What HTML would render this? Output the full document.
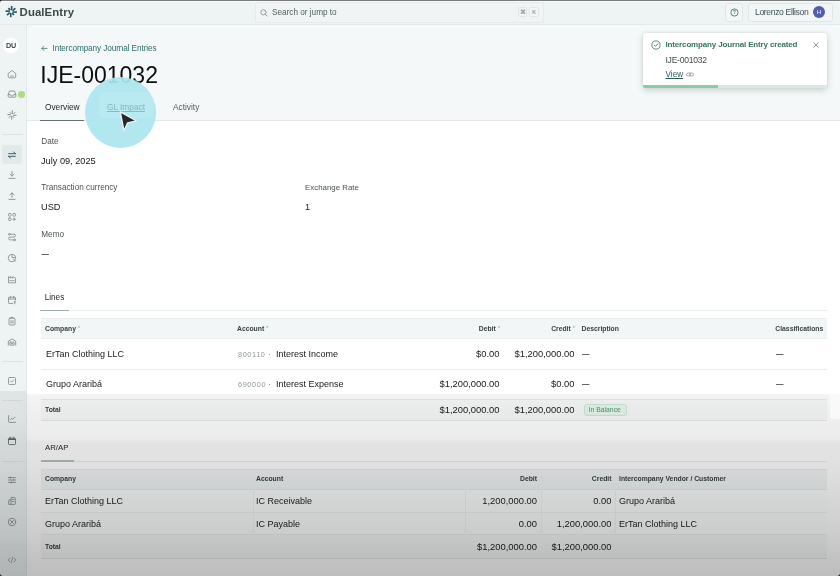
<!DOCTYPE html>
<html lang="en">
<head>
<meta charset="utf-8">
<title>IJE-001032 - DualEntry</title>
<style>
*{box-sizing:border-box;margin:0;padding:0}
html,body{width:840px;height:576px;overflow:hidden;background:#fff}
body{font-family:"Liberation Sans",sans-serif;color:#1c2222;position:relative;-webkit-font-smoothing:antialiased}
.abs{position:absolute}
.t{position:absolute;white-space:nowrap;line-height:1}
#topline{left:0;top:0;width:840px;height:2px;background:linear-gradient(#6a6c6c 0,#8a8c8c 45%,#f6f8f8 55%,#fafbfb 100%)}
#topbar{left:0;top:0;width:840px;height:25px;background:#eef3f4;border-bottom:1px solid #e4eaeb}
#sidebar{left:0;top:25px;width:26.5px;height:551px;background:#eef3f4;border-right:1px solid #e2e8e9}
#headbg{left:26.5px;top:25px;width:813.5px;height:96px;background:#f4f8f8;border-bottom:1px solid #e3e8e8}
#brand{left:19.6px;top:6.5px;font-size:11.4px;font-weight:700;color:#3f4949;letter-spacing:0.08px}
#search{left:254.5px;top:2px;width:289px;height:20.5px;border:1px solid #e5eaeb;border-radius:2.5px;background:#f0f4f5}
#searchtxt{left:272px;top:9px;font-size:8.2px;color:#525c5c}
.kbd{top:6.8px;width:9.6px;height:10.2px;border:1px solid #e1e6e7;border-radius:2px;background:#f1f5f6;font-size:5.6px;color:#687272;text-align:center;line-height:8.4px}
#help{left:725px;top:3px;width:17.5px;height:18.5px;border:1px solid #e0e6e7;border-radius:3px;background:#f2f6f6}
#user{left:748px;top:3px;width:84.5px;height:18.5px;border:1px solid #e0e6e7;border-radius:3px;background:#f2f6f6}
#username{left:755px;top:8px;font-size:8.6px;color:#3d5252;letter-spacing:-0.36px}
#avatar{left:813px;top:6px;width:12px;height:12px;border-radius:50%;background:#525db0;color:#fff;font-size:6px;text-align:center;line-height:12px}
#du{left:3.1px;top:37.8px;width:15.7px;height:15.7px;border-radius:50%;background:#fff;font-size:7.2px;letter-spacing:-0.2px;font-weight:700;color:#3b4545;text-align:center;line-height:16.4px}
#crumb{left:52.5px;top:45.2px;font-size:8.2px;color:#2f6c6c;letter-spacing:-0.09px}
#title{left:40.3px;top:63.5px;font-size:23px;color:#0c0f0f;letter-spacing:0}
.tab{top:103.3px;font-size:8.3px;color:#1c2222}
.lbl{font-size:8.2px;color:#4a5353}
.val{font-size:9.2px;color:#141818}

.th{font-size:6.8px;font-weight:700;color:#363f3f}
.st{color:#5fb5b5;font-weight:400;font-size:6px;position:relative;top:-1px}
.td{font-size:9px;color:#171b1b}
.tc{font-size:7.3px;color:#8f9999;letter-spacing:0.62px}
.r{left:auto;text-align:right}
.n{font-size:9.4px;line-height:0}
.ds{font-size:7.4px;font-weight:700;margin-top:0.3px;color:#2a3030}
.vd{top:491px;width:1px;height:42px;background:#f0f3f3}
#toast{left:643.3px;top:33px;width:184.2px;height:55px;background:#fff;border-radius:2px;box-shadow:0 2px 6px rgba(40,60,60,0.22),0 0 1px rgba(40,60,60,0.25)}
#fade{left:26px;top:394px;width:814px;height:182px;background:linear-gradient(rgba(0,0,0,0.045),rgba(0,0,0,0.065) 14.3%,rgba(0,0,0,0.078) 25.2%,rgba(0,0,0,0.105) 26%,rgba(0,0,0,0.125) 41.8%,rgba(0,0,0,0.16) 58.2%,rgba(0,0,0,0.195) 76.9%,rgba(0,0,0,0.24) 90.1%,rgba(0,0,0,0.255) 100%)}
#fade2{left:0;top:391px;width:26px;height:185px;background:linear-gradient(rgba(0,0,0,0.055),rgba(0,0,0,0.07) 15%,rgba(0,0,0,0.105) 27%,rgba(0,0,0,0.13) 43%,rgba(0,0,0,0.165) 59%,rgba(0,0,0,0.2) 77%,rgba(0,0,0,0.245) 90%,rgba(0,0,0,0.26) 100%)}
#root{position:absolute;left:0;top:0;width:840px;height:576px;overflow:hidden;will-change:transform}
</style>
</head>
<body>
<div id="root">
<div class="abs" id="topbar"></div>
<div class="abs" id="topline"></div>
<div class="abs" id="sidebar"></div>
<div class="abs" id="headbg"></div>

<!-- top bar -->
<svg class="abs" style="left:5px;top:6px" width="13" height="12" viewBox="0 0 13 12"><g stroke="#1c5660" stroke-width="1.6" stroke-linecap="butt" fill="none"><path d="M6.65 4.30 L6.65 0.00"/><path d="M7.72 4.72 L10.34 2.10"/><path d="M7.50 6.05 L11.90 6.05"/><path d="M7.08 7.12 L8.99 9.03"/><path d="M5.75 6.90 L5.75 11.20"/><path d="M4.68 6.48 L2.06 9.10"/><path d="M4.90 5.15 L0.50 5.15"/><path d="M5.32 4.08 L3.41 2.17"/></g></svg>
<div class="t" id="brand">DualEntry</div>
<div class="abs" id="search"></div>
<svg class="abs" style="left:260px;top:8.5px" width="8" height="8" viewBox="0 0 8 8"><circle cx="3.4" cy="3.3" r="2.6" fill="none" stroke="#7f8a8a" stroke-width="0.8"/><path d="M5.4 5.3 L7.3 7.2" stroke="#7f8a8a" stroke-width="0.8" stroke-linecap="round"/></svg>
<div class="t" id="searchtxt">Search or jump to</div>
<div class="abs kbd" style="left:517.9px">⌘</div>
<div class="abs kbd" style="left:529.4px">K</div>
<div class="abs" id="help"></div>
<svg class="abs" style="left:729.5px;top:7.5px" width="9" height="9" viewBox="0 0 9 9"><circle cx="4.5" cy="4.5" r="3.6" fill="none" stroke="#2f6c6c" stroke-width="0.8"/><text x="4.5" y="6.15" font-size="4.6" font-weight="700" text-anchor="middle" fill="#2f6c6c" font-family="Liberation Sans, sans-serif">?</text></svg>
<div class="abs" id="user"></div>
<div class="t" id="username">Lorenzo Ellison</div>
<div class="abs" id="avatar">H</div>

<!-- sidebar -->
<div class="abs" id="du">DU</div>

<svg class="abs" style="left:6.7px;top:68.8px" width="10" height="10" viewBox="0 0 10 10" fill="none" stroke="#848e8e" stroke-width="0.85" stroke-linecap="round" stroke-linejoin="round"><path d="M1.3 4.5 L5 1.4 L8.7 4.5 V7.9 a0.9 0.9 0 0 1 -0.9 0.9 H2.2 a0.9 0.9 0 0 1 -0.9 -0.9 Z"/><path d="M3.6 7.1 H6.4"/></svg>
<svg class="abs" style="left:6.7px;top:89.3px" width="10" height="10" viewBox="0 0 10 10" fill="none" stroke="#848e8e" stroke-width="0.85" stroke-linecap="round" stroke-linejoin="round"><path d="M1.2 5.6 L2.5 2 H7.5 L8.8 5.6 V7.6 a0.6 0.6 0 0 1 -0.6 0.6 H1.8 a0.6 0.6 0 0 1 -0.6 -0.6 Z"/><path d="M1.2 5.6 H3.3 a1.7 1.5 0 0 0 3.4 0 H8.8"/></svg>
<div class="abs" style="left:18.3px;top:91.3px;width:6.6px;height:6.6px;border-radius:50%;background:#aedb84"></div>
<svg class="abs" style="left:6.5px;top:109.7px" width="10" height="10" viewBox="0 0 10 10" fill="none" stroke="#6a7474" stroke-width="0.8" stroke-linecap="butt"><path d="M5.30 3.90 L5.30 0.40 M6.13 4.29 L8.18 2.24 M6.10 5.30 L9.60 5.30 M5.71 6.13 L7.33 7.76 M4.70 6.10 L4.70 9.60 M3.87 5.71 L1.82 7.76 M3.90 4.70 L0.40 4.70 M4.29 3.87 L2.67 2.24"/></svg>
<div class="abs" style="left:2px;top:134px;width:21px;height:1px;background:#dde3e3"></div>
<div class="abs" style="left:1.5px;top:145px;width:20px;height:18.5px;border-radius:2px;background:#e1e9e9"></div>
<svg class="abs" style="left:6.7px;top:149.5px" width="10" height="10" viewBox="0 0 10 10" fill="none" stroke="#2f5f62" stroke-width="0.95" stroke-linecap="round" stroke-linejoin="round"><path d="M1.6 3.7 H8.4 M6.6 1.9 L8.4 3.7"/><path d="M8.4 6.3 H1.6 M3.4 8.1 L1.6 6.3"/></svg>
<svg class="abs" style="left:6.7px;top:170.0px" width="10" height="10" viewBox="0 0 10 10" fill="none" stroke="#848e8e" stroke-width="0.85" stroke-linecap="round" stroke-linejoin="round"><path d="M5 1.4 V6 M2.9 4 L5 6.1 L7.1 4 M1.9 8.4 H8.1"/></svg>
<svg class="abs" style="left:6.7px;top:191.0px" width="10" height="10" viewBox="0 0 10 10" fill="none" stroke="#848e8e" stroke-width="0.85" stroke-linecap="round" stroke-linejoin="round"><path d="M5 6.4 V1.8 M2.9 3.9 L5 1.8 L7.1 3.9 M1.9 8.4 H8.1"/></svg>
<svg class="abs" style="left:6.7px;top:211.5px" width="10" height="10" viewBox="0 0 10 10" fill="none" stroke="#848e8e" stroke-width="0.85" stroke-linecap="round" stroke-linejoin="round"><rect x="1.5" y="1.5" width="2.6" height="2.6" rx="0.8"/><rect x="5.9" y="1.5" width="2.6" height="2.6" rx="0.8"/><rect x="1.5" y="5.9" width="2.6" height="2.6" rx="0.8"/><path d="M7.2 5.9 V8.5 M5.9 7.2 H8.5"/></svg>
<svg class="abs" style="left:6.7px;top:232.0px" width="10" height="10" viewBox="0 0 10 10" fill="none" stroke="#848e8e" stroke-width="0.85" stroke-linecap="round" stroke-linejoin="round"><circle cx="2.4" cy="2.3" r="0.9"/><path d="M3.4 2.3 H7 a1.4 1.4 0 0 1 0 2.8 H3 a1.4 1.4 0 0 0 0 2.8 H6.4"/><circle cx="7.5" cy="7.9" r="0.9"/></svg>
<svg class="abs" style="left:6.7px;top:253.0px" width="10" height="10" viewBox="0 0 10 10" fill="none" stroke="#848e8e" stroke-width="0.85" stroke-linecap="round" stroke-linejoin="round"><path d="M8.6 5.6 A3.7 3.7 0 1 1 4.4 1.4"/><path d="M5.4 1.3 A3.6 3.6 0 0 1 8.8 4.6 H5.4 Z"/><path d="M6.8 6.2 L8.4 8.2"/></svg>
<svg class="abs" style="left:6.7px;top:274.0px" width="10" height="10" viewBox="0 0 10 10" fill="none" stroke="#848e8e" stroke-width="0.85" stroke-linecap="round" stroke-linejoin="round"><path d="M1.5 8.4 V2.6 L3.6 4.2 V2.6 L5.8 4.2 V2.6 L8.5 4.2 V8.4 Z"/><path d="M3 6.6 H3.8 M4.8 6.6 H5.6 M6.6 6.6 H7.2"/></svg>
<svg class="abs" style="left:6.7px;top:295.0px" width="10" height="10" viewBox="0 0 10 10" fill="none" stroke="#848e8e" stroke-width="0.85" stroke-linecap="round" stroke-linejoin="round"><path d="M8.5 5 V2.9 a0.7 0.7 0 0 0 -0.7 -0.7 H2.2 a0.7 0.7 0 0 0 -0.7 0.7 V7.8 a0.7 0.7 0 0 0 0.7 0.7 H5.5"/><path d="M3.3 1.3 V3 M6.7 1.3 V3 M1.5 4 H8.5"/><path d="M7.8 6.2 V8.8 M6.9 7 H8.3"/></svg>
<svg class="abs" style="left:6.7px;top:316.0px" width="10" height="10" viewBox="0 0 10 10" fill="none" stroke="#848e8e" stroke-width="0.85" stroke-linecap="round" stroke-linejoin="round"><rect x="2" y="2.2" width="6" height="6.8" rx="0.9"/><path d="M3.8 2.2 V1.4 H6.2 V2.2"/><path d="M3.6 5 H6.4 M3.6 6.8 H6.4"/></svg>
<svg class="abs" style="left:6.7px;top:336.5px" width="10" height="10" viewBox="0 0 10 10" fill="none" stroke="#808a8a" stroke-width="0.85" stroke-linecap="round" stroke-linejoin="round"><path d="M1.3 8.2 V4.2 L5 2 L8.7 4.2 V8.2"/><rect x="2.9" y="5.2" width="4.2" height="3" rx="0.4"/><path d="M4.3 6.7 H5.7"/></svg>
<div class="abs" style="left:2px;top:361px;width:21px;height:1px;background:#dde3e3"></div>
<svg class="abs" style="left:6.7px;top:375.7px" width="10" height="10" viewBox="0 0 10 10" fill="none" stroke="#848e8e" stroke-width="0.85" stroke-linecap="round" stroke-linejoin="round"><rect x="1.5" y="1.5" width="7" height="7" rx="1"/><path d="M3.5 5.1 L4.6 6.2 L6.6 3.9"/></svg>
<div class="abs" style="left:2px;top:400px;width:21px;height:1px;background:#dde3e3"></div>
<svg class="abs" style="left:6.7px;top:414.4px" width="10" height="10" viewBox="0 0 10 10" fill="none" stroke="#848e8e" stroke-width="0.85" stroke-linecap="round" stroke-linejoin="round"><path d="M1.6 1.6 V7.4 a1 1 0 0 0 1 1 H8.6"/><path d="M3.2 5.6 L4.6 4.2 L5.8 5.2 L8 3.2"/></svg>
<svg class="abs" style="left:6.7px;top:435.5px" width="10" height="10" viewBox="0 0 10 10" fill="none" stroke="#5e6868" stroke-width="0.85" stroke-linecap="round" stroke-linejoin="round"><rect x="1.5" y="2.2" width="7" height="6.4" rx="0.9"/><path d="M3.3 1.2 V3 M6.7 1.2 V3"/><path d="M1.5 3.4 H8.5" stroke-width="1.3"/></svg>
<div class="abs" style="left:2px;top:460.5px;width:21px;height:1px;background:#dde3e3"></div>
<svg class="abs" style="left:6.7px;top:475.0px" width="10" height="10" viewBox="0 0 10 10" fill="none" stroke="#848e8e" stroke-width="0.85" stroke-linecap="round" stroke-linejoin="round"><path d="M1.4 2.6 H8.6 M1.4 5 H8.6 M1.4 7.4 H8.6"/><path d="M3.4 1.8 V3.4 M6.4 4.2 V5.8 M4.2 6.6 V8.2"/></svg>
<svg class="abs" style="left:6.7px;top:496.0px" width="10" height="10" viewBox="0 0 10 10" fill="none" stroke="#858f8f" stroke-width="0.85" stroke-linecap="round" stroke-linejoin="round"><rect x="4" y="1.6" width="4.2" height="6.8" rx="0.6"/><path d="M4 4 H2.2 a0.5 0.5 0 0 0 -0.5 0.5 V8.4 H4"/><path d="M5.6 3.4 V3.6 M6.6 3.4 V3.6 M5.6 5.4 V5.6 M6.6 5.4 V5.6"/></svg>
<svg class="abs" style="left:6.7px;top:516.7px" width="10" height="10" viewBox="0 0 10 10" fill="none" stroke="#848e8e" stroke-width="0.85" stroke-linecap="round" stroke-linejoin="round"><circle cx="5" cy="5" r="3.7"/><path d="M3.5 3.5 L6.5 6.5 M6.5 3.5 L3.5 6.5"/></svg>
<svg class="abs" style="left:6.7px;top:555.3px" width="10" height="10" viewBox="0 0 10 10" fill="none" stroke="#8a9494" stroke-width="0.75" stroke-linecap="round" stroke-linejoin="round"><path d="M2.9 3.2 L1.1 5 L2.9 6.8 M7.1 3.2 L8.9 5 L7.1 6.8 M5.8 2.2 L4.2 7.8"/></svg>

<!-- heading -->
<svg class="abs" style="left:40.5px;top:45px" width="7" height="7" viewBox="0 0 7 7" fill="none" stroke="#3a7575" stroke-width="0.8" stroke-linecap="round" stroke-linejoin="round"><path d="M6 3.4 H1 M2.9 1.4 L0.9 3.4 L2.9 5.4"/></svg>
<div class="t" id="crumb">Intercompany Journal Entries</div>
<div class="t" id="title">IJE-001032</div>
<div class="t tab" style="left:45px">Overview</div>
<div class="t tab" style="left:107px;color:#4f8d94;text-decoration:underline">GL Impact</div>
<div class="t tab" style="left:173px;color:#525b5b">Activity</div>
<div class="abs" style="left:40.2px;top:119.7px;width:44px;height:1.5px;background:#647070"></div>

<!-- fields -->
<div class="t lbl" style="left:41.3px;top:138px">Date</div>
<div class="t val" style="left:41px;top:157px">July 09, 2025</div>
<div class="t lbl" style="left:41.3px;top:184px">Transaction currency</div>
<div class="t val" style="left:41px;top:203px">USD</div>
<div class="t lbl" style="left:305px;top:184px;font-size:7.9px">Exchange Rate</div>
<div class="t val" style="left:305px;top:203px">1</div>
<div class="t lbl" style="left:41.3px;top:231px">Memo</div>
<div class="t ds" style="left:41.6px;top:249.3px">—</div>

<!-- Lines tab -->
<div class="t" style="left:44.7px;top:294.4px;font-size:8.2px;color:#1c2222">Lines</div>
<div class="abs" style="left:41px;top:310px;width:786px;height:1px;background:#ebefef"></div>
<div class="abs" style="left:40px;top:309.5px;width:28.8px;height:1.4px;background:#a0b0b0"></div>

<!-- table 1 -->
<div class="abs" style="left:41px;top:317.5px;width:786px;height:21.3px;background:#f2f6f6;border-top:1px solid #e8eded;border-bottom:1px solid #e8eded"></div>
<div class="t th" style="left:45px;top:325.6px">Company <span class="st">*</span></div>
<div class="t th" style="left:237px;top:325.6px">Account <span class="st">*</span></div>
<div class="t th r" style="right:340px;top:325.6px">Debit <span class="st">*</span></div>
<div class="t th r" style="right:265px;top:325.6px">Credit <span class="st">*</span></div>
<div class="t th" style="left:581.5px;top:325.6px">Description</div>
<div class="t th" style="left:775.3px;top:325.6px">Classifications</div>

<div class="t td" style="left:46px;top:349.5px">ErTan Clothing LLC</div>
<div class="t tc" style="left:238px;top:350.5px">800110</div>
<div class="t td" style="left:268px;top:349.5px"><span style="color:#7d8787">·</span>&nbsp; Interest Income</div>
<div class="t td r" style="right:340.5px;top:349.5px"><span class="n">$0.00</span></div>
<div class="t td r" style="right:265.5px;top:349.5px"><span class="n">$1,200,000.00</span></div>
<div class="t td ds" style="left:582px;top:349.5px">—</div>
<div class="t td ds" style="left:776px;top:349.5px">—</div>
<div class="abs" style="left:41px;top:369px;width:786px;height:1px;background:#e9eded"></div>

<div class="t td" style="left:46px;top:380.2px">Grupo Araribá</div>
<div class="t tc" style="left:238px;top:381px">690000</div>
<div class="t td" style="left:268px;top:380.2px"><span style="color:#7d8787">·</span>&nbsp; Interest Expense</div>
<div class="t td r" style="right:340.5px;top:380.2px"><span class="n">$1,200,000.00</span></div>
<div class="t td r" style="right:265.5px;top:380.2px"><span class="n">$0.00</span></div>
<div class="t td ds" style="left:582px;top:380.2px">—</div>
<div class="t td ds" style="left:776px;top:380.2px">—</div>

<div class="abs" style="left:41px;top:399px;width:786px;height:22px;background:#f8fafa;border-top:1px solid #e6eaea;border-bottom:1px solid #e6eaea"></div>
<div class="t th" style="left:45px;top:406.5px">Total</div>
<div class="t td r" style="right:340.5px;top:405.5px"><span class="n">$1,200,000.00</span></div>
<div class="t td r" style="right:265.5px;top:405.5px"><span class="n">$1,200,000.00</span></div>
<div class="abs" style="left:583.6px;top:403.7px;width:43px;height:12.8px;border:1px solid #cbe9d7;border-radius:3px;background:#e9f7ee"></div>
<div class="t" style="left:588.7px;top:406.8px;font-size:6.8px;color:#4a9a6c">In Balance</div>

<!-- AR/AP -->
<div class="t" style="left:45px;top:444px;font-size:7.8px;color:#1c2222">AR/AP</div>
<div class="abs" style="left:41px;top:461px;width:786px;height:1px;background:#eaeeee"></div>
<div class="abs" style="left:40.5px;top:460.4px;width:33px;height:1.5px;background:#b2c1c1"></div>

<div class="abs" style="left:41px;top:469px;width:786px;height:21px;background:#f1f5f5;border-top:1px solid #e9eded;border-bottom:1px solid #e9eded"></div>
<div class="t th" style="left:45px;top:476px">Company</div>
<div class="t th" style="left:256px;top:476px">Account</div>
<div class="t th r" style="right:303px;top:476px">Debit</div>
<div class="t th r" style="right:228.5px;top:476px">Credit</div>
<div class="t th" style="left:619px;top:476px">Intercompany Vendor / Customer</div>

<div class="abs" style="left:41px;top:490px;width:786px;height:44px;background:#fcfdfd"></div>
<div class="t td" style="left:45px;top:496.5px">ErTan Clothing LLC</div>
<div class="t td" style="left:256px;top:496.5px">IC Receivable</div>
<div class="t td r" style="right:303px;top:496.5px"><span class="n">1,200,000.00</span></div>
<div class="t td r" style="right:228.5px;top:496.5px"><span class="n">0.00</span></div>
<div class="t td" style="left:619px;top:496.5px">Grupo Araribá</div>
<div class="abs" style="left:41px;top:512px;width:786px;height:1px;background:#eff2f2"></div>
<div class="t td" style="left:45px;top:520.3px">Grupo Araribá</div>
<div class="t td" style="left:256px;top:520.3px">IC Payable</div>
<div class="t td r" style="right:303px;top:520.3px"><span class="n">0.00</span></div>
<div class="t td r" style="right:228.5px;top:520.3px"><span class="n">1,200,000.00</span></div>
<div class="t td" style="left:619px;top:520.3px">ErTan Clothing LLC</div>
<div class="abs vd" style="left:253px"></div>
<div class="abs vd" style="left:465px"></div>
<div class="abs vd" style="left:541px"></div>
<div class="abs vd" style="left:615px"></div>

<div class="abs" style="left:41px;top:534px;width:786px;height:25px;background:#f7f9f9;border-top:1px solid #eceff0;border-bottom:1px solid #e6eaea"></div>
<div class="t th" style="left:45px;top:543.5px">Total</div>
<div class="t td r" style="right:303px;top:542.5px"><span class="n">$1,200,000.00</span></div>
<div class="t td r" style="right:228.5px;top:542.5px"><span class="n">$1,200,000.00</span></div>

<!-- click highlight + cursor -->
<div class="abs" style="left:85px;top:76.5px;width:71px;height:71px;border-radius:50%;background:rgba(172,229,239,0.93);overflow:hidden"><div class="abs" style="left:13.5px;top:15.5px;width:55px;height:26px;border-radius:4px;background:rgba(255,255,255,0.1)"></div></div>
<div class="t tab" style="left:107px;color:#86b8c7;text-decoration:underline">GL Impact</div>
<svg class="abs" style="left:116px;top:108px" width="24" height="26" viewBox="0 0 24 26"><path d="M4.3 3.9 L20.2 12.8 L11.6 14.8 L8 22.8 Z" fill="#262828" stroke="#e4f3f6" stroke-width="1.3" stroke-linejoin="round"/></svg>

<!-- toast -->
<div class="abs" id="toast"></div>
<div class="abs" style="left:643px;top:85px;width:184.5px;height:3px;background:#dde8e3;border-radius:0 0 2px 2px"></div>
<div class="abs" style="left:643px;top:85px;width:75.3px;height:3px;background:#88cca2;border-radius:0 0 0 2px"></div>
<svg class="abs" style="left:650.7px;top:39.6px" width="10" height="10" viewBox="0 0 10 10"><circle cx="5" cy="5" r="4.1" fill="none" stroke="#3a7264" stroke-width="0.8"/><path d="M3.2 5.1 L4.5 6.4 L6.9 3.8" fill="none" stroke="#3a7264" stroke-width="0.8" stroke-linecap="round" stroke-linejoin="round"/></svg>
<div class="t" style="left:665.5px;top:40.5px;font-size:8px;font-weight:700;color:#37735f;letter-spacing:-0.15px">Intercompany Journal Entry created</div>
<div class="t" style="left:665.5px;top:56px;font-size:8.6px;letter-spacing:-0.27px;color:#454d4d">IJE-001032</div>
<div class="t" style="left:665.5px;top:71px;font-size:8.2px;color:#2f5c5c;text-decoration:underline">View</div>
<svg class="abs" style="left:685.5px;top:71.5px" width="8" height="5" viewBox="0 0 8 5"><rect x="0.5" y="1" width="4" height="3" rx="1.5" fill="none" stroke="#7a8a8a" stroke-width="0.7"/><rect x="3.5" y="1" width="4" height="3" rx="1.5" fill="none" stroke="#7a8a8a" stroke-width="0.7"/></svg>
<svg class="abs" style="left:812.5px;top:42px" width="6" height="6" viewBox="0 0 6 6"><path d="M0.7 0.7 L5.3 5.3 M5.3 0.7 L0.7 5.3" stroke="#6a7474" stroke-width="0.7" stroke-linecap="round"/></svg>

<!-- fade overlay -->
<div class="abs" id="fade"></div>
<div class="abs" id="fade2"></div>
<div class="abs" style="left:0;top:573px;width:3px;height:3px;background:radial-gradient(circle at 100% 0,rgba(30,30,30,0) 2.5px,rgba(30,30,30,0.9) 3.4px)"></div>
<div class="abs" style="left:837px;top:573px;width:3px;height:3px;background:radial-gradient(circle at 0 0,rgba(30,30,30,0) 2.5px,rgba(30,30,30,0.9) 3.4px)"></div>
<div class="abs" style="left:0;top:0;width:3px;height:3px;background:radial-gradient(circle at 100% 100%,rgba(30,30,30,0) 2.5px,rgba(30,30,30,0.9) 3.4px)"></div>

<div class="abs" style="left:830px;top:394px;width:10px;height:25px;background:#f9f9f9;border-radius:0 0 0 3px"></div>

</div>
</body>
</html>
